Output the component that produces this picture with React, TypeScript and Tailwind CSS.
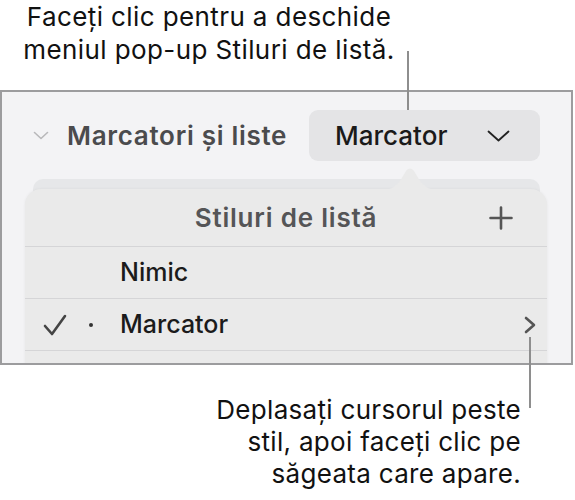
import { ReactNode } from "react";

const font = { fontFamily: "Inter, 'Noto Sans', sans-serif" };

function Row({ left, children, right, divider = true }: { left?: ReactNode; children?: ReactNode; right?: ReactNode; divider?: boolean }) {
  return (
    <div className={`flex items-center h-[52px] pr-[11px] ${divider ? "border-b border-[#d5d5d7]" : ""}`}>
      <div className="w-[95px] flex items-center pl-[18px] gap-[22px]">{left}</div>
      <div className="flex-1 text-[25px] font-medium text-[#1b1b1b]">{children}</div>
      {right}
    </div>
  );
}

export default function App() {
  return (
    <div className="relative w-[575px] h-[500px] bg-white overflow-hidden" style={font}>
      {/* top callout */}
      <div className="w-[418px] text-center text-[26px] leading-[33px] tracking-[0.4px] text-[#111]">
        <p>Faceți clic pentru a deschide</p>
        <p>meniul pop-up Stiluri de listă.</p>
      </div>

      {/* panel */}
      <div className="mt-[24px] w-[573px] h-[275px] border-2 border-[#9c9c9e] bg-[#f3f3f5] overflow-hidden">
        <div className="flex items-center h-[51px] mt-[18px] pr-[31px]">
          <svg width="16" height="9" viewBox="0 0 16 9" className="ml-[31px]">
            <path d="M1.5 1.5 L8 7.5 L14.5 1.5" fill="none" stroke="#b8b8ba" strokeWidth="1.6" strokeLinecap="round" strokeLinejoin="round" />
          </svg>
          <span className="ml-[18px] text-[26px] font-semibold text-[#4b4b4d] tracking-[0.7px]">Marcatori și liste</span>
          <div className="ml-auto w-[231px] h-[51px] rounded-[9px] bg-[#e4e4e6] flex items-center justify-between pl-[26px] pr-[30px]">
            <span className="text-[26px] font-medium text-[#1a1a1a]">Marcator</span>
            <svg width="23" height="12" viewBox="0 0 23 12">
              <path d="M1.5 1.5 L11.5 10.5 L21.5 1.5" fill="none" stroke="#222" strokeWidth="1.8" strokeLinecap="round" strokeLinejoin="round" />
            </svg>
          </div>
        </div>

        {/* card behind popover */}
        <div className="mt-[18px] ml-[31px] w-[507px] h-[30px] rounded-t-[10px] bg-[#e6e7e9]" />

        {/* popover */}
        <div className="relative -mt-[20px] ml-[23px] w-[522px] h-[200px] rounded-t-[16px] bg-[#eaeaea] shadow-[0_0_3px_rgba(0,0,0,0.06)]">
          <svg width="60" height="24" viewBox="0 0 60 24" className="absolute -top-[23px] left-[355px]">
            <path d="M0 24 C10 24 14 22 20 15 L26 5 C28 1.5 32 1.5 34 5 L40 15 C46 22 50 24 60 24 Z" fill="#eaeaea" />
          </svg>
          <div className="relative flex items-center justify-center h-[58px] border-b border-[#d5d5d7]">
            <span className="text-[26px] font-semibold text-[#555557] tracking-[0.8px]">Stiluri de listă</span>
            <svg width="24" height="24" viewBox="0 0 24 24" className="absolute right-[34px] top-[17px]">
              <path d="M12 1.5 V22.5 M1.5 12 H22.5" stroke="#555" strokeWidth="2.6" strokeLinecap="round" />
            </svg>
          </div>
          <Row>Nimic</Row>
          <Row
            left={
              <>
                <svg width="24" height="22" viewBox="0 0 24 22">
                  <path d="M2 12 L9 20 L22 2" fill="none" stroke="#444" strokeWidth="2.6" strokeLinecap="round" strokeLinejoin="round" />
                </svg>
                <span className="w-[4px] h-[4px] rounded-full bg-[#333]" />
              </>
            }
            right={
              <svg width="12" height="18" viewBox="0 0 12 18">
                <path d="M2 2 L10 9 L2 16" fill="none" stroke="#555" strokeWidth="2.6" strokeLinecap="round" strokeLinejoin="round" />
              </svg>
            }
          >
            Marcator
          </Row>
        </div>
      </div>

      {/* bottom callout */}
      <div className="mt-[29px] pr-[54px] text-right text-[26px] leading-[32px] tracking-[0.3px] text-[#111]">
        <p>Deplasați cursorul peste</p>
        <p>stil, apoi faceți clic pe</p>
        <p>săgeata care apare.</p>
      </div>

      {/* leader lines */}
      <div className="absolute left-[407px] top-[51px] w-[2px] h-[59px] bg-[#8e8e8e]" />
      <div className="absolute left-[529px] top-[337px] w-[2px] h-[71px] bg-[#8e8e8e]" />
    </div>
  );
}
